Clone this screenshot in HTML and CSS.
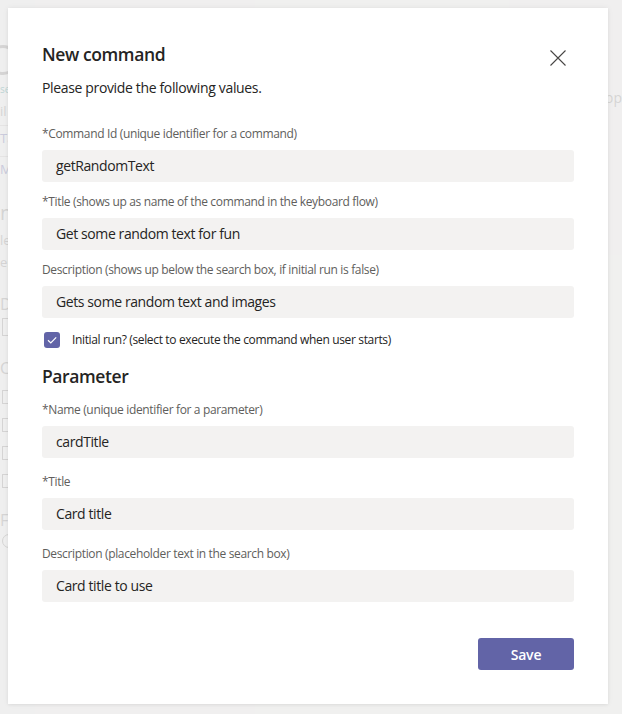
FILE: index.html
```html
<!DOCTYPE html>
<html lang="en">
<head>
<meta charset="utf-8">
<title>New command</title>
<link rel="stylesheet" href="styles.css">
</head>
<body>
<div class="app">
  <div class="app-side">
    <div class="bg-circle"></div>
    <div class="bg-text bg-teal">se</div>
    <div class="bg-text">il</div>
    <div class="bg-row">Ta</div>
    <div class="bg-row">M</div>
    <div class="bg-big">n</div>
    <div class="bg-text">le</div>
    <div class="bg-text">ep</div>
    <div class="bg-text bg-d">D</div>
    <div class="bg-icon"></div>
    <div class="bg-text bg-c">C</div>
    <div class="bg-icon small"></div>
    <div class="bg-icon small"></div>
    <div class="bg-icon small"></div>
    <div class="bg-icon small"></div>
    <div class="bg-text bg-f">F</div>
    <div class="bg-icon round"></div>
  </div>
  <div class="app-main"><span class="bg-app">pp</span></div>
</div>

<div class="overlay">
  <div class="dialog" role="dialog" aria-labelledby="dlg-title">
    <div class="dialog-header">
      <h1 id="dlg-title" class="dialog-title">New command</h1>
      <button class="close-btn" aria-label="Close">
        <svg width="16" height="16" viewBox="0 0 16 16"><path d="M0.5 0.5 L15.5 15.5 M15.5 0.5 L0.5 15.5" stroke="#484644" stroke-width="1.1" fill="none"/></svg>
      </button>
    </div>
    <p class="dialog-sub">Please provide the following values.</p>

    <div class="section">
      <label class="field">
        <span class="field-label">*Command Id (unique identifier for a command)</span>
        <span class="input">getRandomText</span>
      </label>
      <label class="field">
        <span class="field-label">*Title (shows up as name of the command in the keyboard flow)</span>
        <span class="input">Get some random text for fun</span>
      </label>
      <label class="field">
        <span class="field-label">Description (shows up below the search box, if initial run is false)</span>
        <span class="input">Gets some random text and images</span>
      </label>
      <div class="check-row">
        <span class="checkbox">
          <svg width="16" height="16" viewBox="0 0 16 16"><path d="M4 8.3 L6.8 11 L12.2 5.3" stroke="#fff" stroke-width="1.2" fill="none"/></svg>
        </span>
        <span class="check-label">Initial run? (select to execute the command when user starts)</span>
      </div>
    </div>

    <h2 class="section-title">Parameter</h2>
    <div class="section param">
      <label class="field">
        <span class="field-label">*Name (unique identifier for a parameter)</span>
        <span class="input">cardTitle</span>
      </label>
      <label class="field">
        <span class="field-label">*Title</span>
        <span class="input">Card title</span>
      </label>
      <label class="field">
        <span class="field-label">Description (placeholder text in the search box)</span>
        <span class="input">Card title to use</span>
      </label>
    </div>

    <div class="dialog-footer">
      <button class="btn-primary">Save</button>
    </div>
  </div>
</div>
</body>
</html>
```

FILE: styles.css
```css
* { box-sizing: border-box; }

html, body {
  margin: 0;
  padding: 0;
  width: 622px;
  height: 714px;
  overflow: hidden;
}

body {
  font-family: "Segoe UI", "Open Sans", "Noto Sans", sans-serif;
  background: #efefef;
  color: #252423;
  position: relative;
}

/* faded background app */
.app {
  display: flex;
  height: 714px;
  opacity: 0.25;
}
.app-side {
  width: 40px;
  padding-top: 45px;
  display: flex;
  flex-direction: column;
  gap: 6px;
  color: #8a8886;
  font-size: 13px;
}
.bg-circle {
  width: 30px;
  height: 30px;
  margin-left: -12px;
  border-radius: 50%;
  border: 3px solid #8a8886;
}
.bg-text { line-height: 16px; }
.bg-teal { color: #2b8a8a; font-size: 10px; }
.bg-row {
  border-top: 1px solid #c8c6c4;
  line-height: 24px;
  color: #6264a7;
}
.bg-big { font-size: 20px; margin-top: 12px; }
.bg-d { margin-top: 20px; font-size: 16px; }
.bg-c { margin-top: 18px; font-size: 16px; }
.bg-f { margin-top: 18px; font-size: 16px; }
.bg-icon {
  width: 14px;
  height: 18px;
  border: 1px solid #8a8886;
  margin-left: 2px;
}
.bg-icon.small { height: 14px; margin-top: 8px; }
.bg-icon.round { border-radius: 50%; height: 14px; }
.app-main {
  flex: 1;
  background: #f3f2f1;
  padding: 88px 0 0 570px;
  color: #8a8886;
  font-size: 14px;
}

/* dialog */
.overlay {
  position: absolute;
  inset: 0;
  padding: 8px 14px 10px 8px;
  display: flex;
  align-items: flex-start;
}

.dialog {
  width: 600px;
  background: #fff;
  padding: 34px;
  box-shadow: 0 0 6px rgba(0, 0, 0, 0.06), 0 1px 3px rgba(0, 0, 0, 0.05);
  display: flex;
  flex-direction: column;
}

.dialog-header {
  display: flex;
  justify-content: space-between;
  align-items: flex-start;
}

.dialog-title {
  margin: 0;
  font-size: 17.5px;
  line-height: 24px;
  font-weight: 600;
  letter-spacing: -0.4px;
  color: #252423;
}

.close-btn {
  width: 32px;
  height: 32px;
  padding: 0;
  border: 0;
  background: transparent;
  display: flex;
  align-items: center;
  justify-content: center;
}

.dialog-sub {
  margin: 4px 0 0;
  font-size: 14px;
  line-height: 20px;
  letter-spacing: -0.35px;
  color: #252423;
}

.section {
  display: flex;
  flex-direction: column;
  gap: 12px;
  margin-top: 28px;
}
.section.param {
  gap: 16px;
  margin-top: 14px;
}

.field {
  display: flex;
  flex-direction: column;
  gap: 8px;
}

.field-label {
  font-size: 12px;
  line-height: 16px;
  letter-spacing: -0.35px;
  color: #605e5c;
}

.input {
  height: 32px;
  background: #f3f2f1;
  border-radius: 3px;
  padding: 0 14px;
  font-size: 14px;
  line-height: 32px;
  letter-spacing: -0.4px;
  color: #252423;
}

.check-row {
  display: flex;
  align-items: center;
  height: 20px;
  padding-left: 2px;
  gap: 12px;
}
.checkbox {
  width: 16px;
  height: 16px;
  border-radius: 3px;
  background: #6264a7;
  display: flex;
}
.check-label {
  font-size: 12px;
  line-height: 16px;
  letter-spacing: -0.35px;
  color: #252423;
}

.section-title {
  margin: 14px 0 0;
  font-size: 17.5px;
  line-height: 24px;
  font-weight: 600;
  letter-spacing: -0.4px;
  color: #252423;
}

.dialog-footer {
  display: flex;
  justify-content: flex-end;
  margin-top: 36px;
}

.btn-primary {
  width: 96px;
  height: 32px;
  border: 0;
  border-radius: 3px;
  background: #6264a7;
  color: #fff;
  font-family: inherit;
  font-size: 14px;
  font-weight: 600;
  letter-spacing: -0.2px;
}
```
